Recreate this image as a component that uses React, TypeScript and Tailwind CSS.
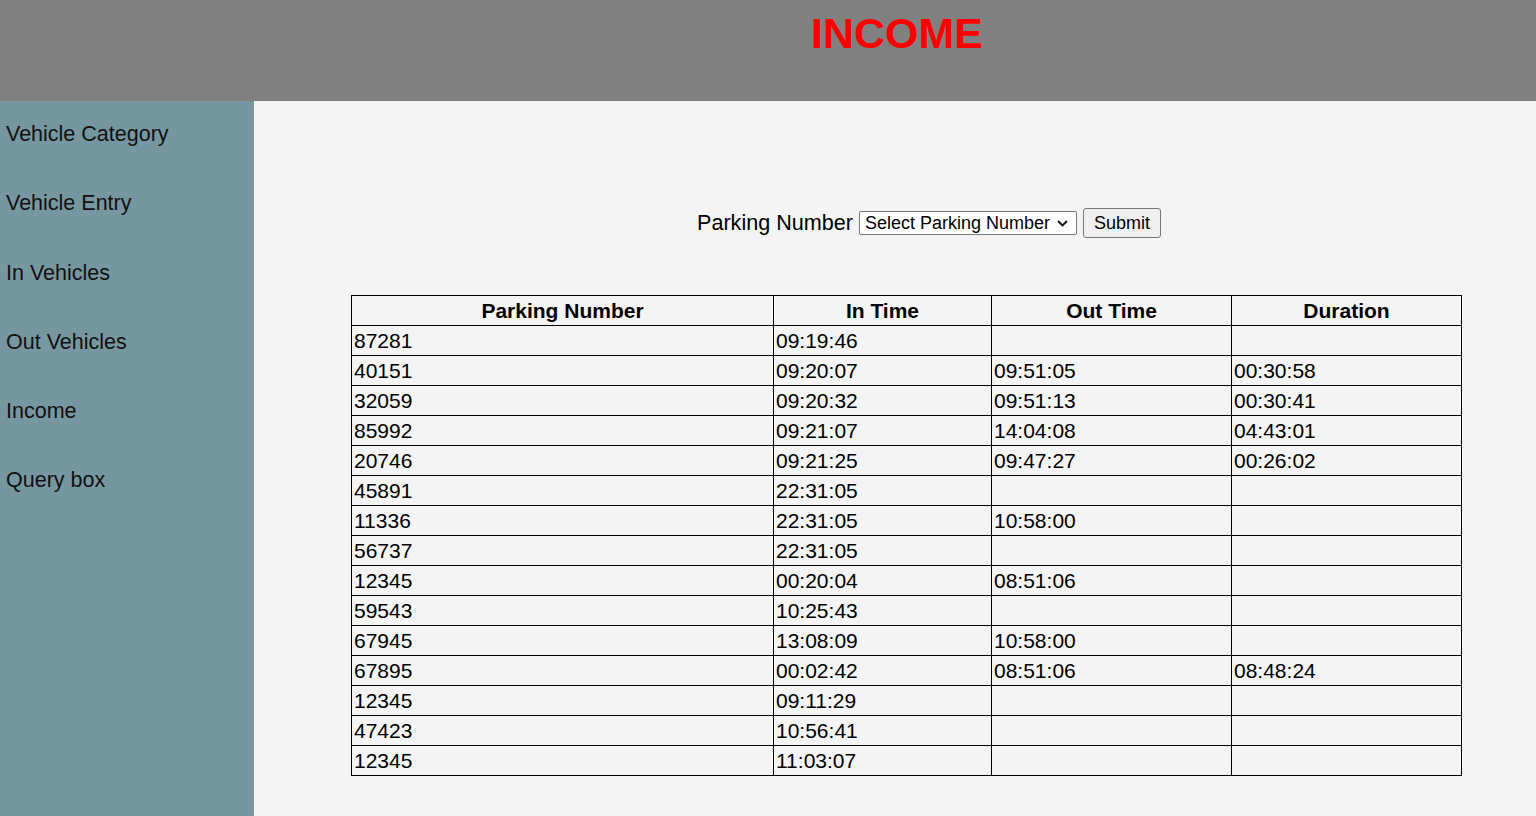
import React from 'react';

const rows: [string, string, string, string][] = [
  ['87281', '09:19:46', '', ''],
  ['40151', '09:20:07', '09:51:05', '00:30:58'],
  ['32059', '09:20:32', '09:51:13', '00:30:41'],
  ['85992', '09:21:07', '14:04:08', '04:43:01'],
  ['20746', '09:21:25', '09:47:27', '00:26:02'],
  ['45891', '22:31:05', '', ''],
  ['11336', '22:31:05', '10:58:00', ''],
  ['56737', '22:31:05', '', ''],
  ['12345', '00:20:04', '08:51:06', ''],
  ['59543', '10:25:43', '', ''],
  ['67945', '13:08:09', '10:58:00', ''],
  ['67895', '00:02:42', '08:51:06', '08:48:24'],
  ['12345', '09:11:29', '', ''],
  ['47423', '10:56:41', '', ''],
  ['12345', '11:03:07', '', ''],
];

const links = ['Vehicle Category', 'Vehicle Entry', 'In Vehicles', 'Out Vehicles', 'Income', 'Query box'];

export default function App() {
  return (
    <div className="min-h-screen bg-[#f4f4f4] text-black font-['Liberation_Sans',Arial,sans-serif]">
      {/* top bar */}
      <header className="h-[101px] bg-[#808080] flex justify-center pl-[258px]">
        <h1 className="mt-[1px] text-[43px] font-bold text-[#ff0000] leading-normal">INCOME</h1>
      </header>

      <div className="flex">
        {/* side nav */}
        <nav className="w-[254px] min-h-[715px] bg-[#7697a0] pt-[21px] pl-[6px] flex flex-col gap-[45.3px]">
          {links.map((l) => (
            <a key={l} href="#" className="text-[21.5px] leading-[24px] text-[#111]">
              {l}
            </a>
          ))}
        </nav>

        <main className="flex-1">
          <form className="mt-[107px] ml-[443px] flex items-center gap-[6px]" onSubmit={(e) => e.preventDefault()}>
            <label className="text-[21.6px] leading-[24px]">Parking Number</label>
            <div className="relative">
              <select className="appearance-none h-[24px] w-[218px] text-[18px] leading-[20px] bg-white border border-[#767676] rounded-[2px] pl-[5px] pr-[20px]">
                <option>Select Parking Number</option>
              </select>
              <svg className="absolute right-[9px] top-[9px] pointer-events-none" width="11" height="7" viewBox="0 0 11 7" fill="none">
                <path d="M1 1l4.5 4.5L10 1" stroke="#111" strokeWidth="1.8" />
              </svg>
            </div>
            <button type="submit" className="h-[30px] w-[78px] text-[18px] bg-[#efefef] border border-[#767676] rounded-[3px]">
              Submit
            </button>
          </form>

          <table className="mt-[57px] ml-[97px] border-collapse border border-black text-[21px]">
            <thead>
              <tr className="h-[30px]">
                <th className="w-[422px] border border-black font-bold p-0 leading-[24px]">Parking Number</th>
                <th className="w-[218px] border border-black font-bold p-0 leading-[24px]">In Time</th>
                <th className="w-[240px] border border-black font-bold p-0 leading-[24px]">Out Time</th>
                <th className="w-[230px] border border-black font-bold p-0 leading-[24px]">Duration</th>
              </tr>
            </thead>
            <tbody>
              {rows.map((r, i) => (
                <tr key={i} className="h-[30px]">
                  {r.map((c, j) => (
                    <td key={j} className="border border-black px-[2px] py-0 leading-[24px]">
                      {c}
                    </td>
                  ))}
                </tr>
              ))}
            </tbody>
          </table>
        </main>
      </div>
    </div>
  );
}
